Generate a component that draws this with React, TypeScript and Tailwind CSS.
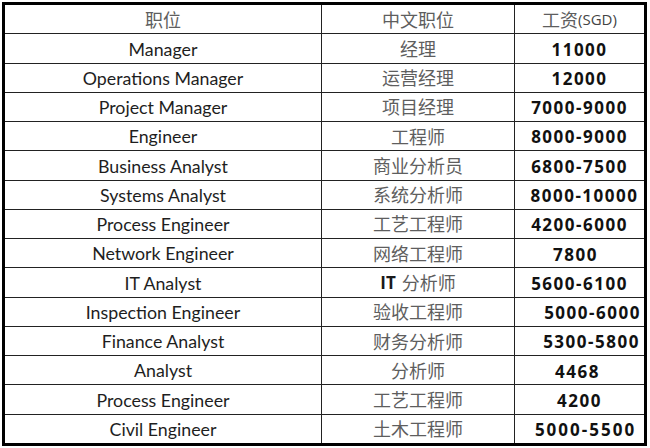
import React from "react";

type Row = { en: string; zh: React.ReactNode; pay: string; nudge: string };

const zhFont = { fontFamily: '"Noto Sans CJK SC", sans-serif' };

const rows: Row[] = [
  { en: "Manager", zh: "经理", pay: "11000", nudge: "" },
  { en: "Operations Manager", zh: "运营经理", pay: "12000", nudge: "" },
  { en: "Project Manager", zh: "项目经理", pay: "7000-9000", nudge: "" },
  { en: "Engineer", zh: "工程师", pay: "8000-9000", nudge: "" },
  { en: "Business Analyst", zh: "商业分析员", pay: "6800-7500", nudge: "" },
  { en: "Systems Analyst", zh: "系统分析师", pay: "8000-10000", nudge: "pl-[10px]" },
  { en: "Process Engineer", zh: "工艺工程师", pay: "4200-6000", nudge: "" },
  { en: "Network Engineer", zh: "网络工程师", pay: "7800", nudge: "pr-[8px]" },
  {
    en: "IT Analyst",
    zh: (
      <>
        <span className="font-bold text-[#1a1a1a] font-['Open_Sans'] text-[17px] mr-[6px]">IT</span>分析师
      </>
    ),
    pay: "5600-6100",
    nudge: "",
  },
  { en: "Inspection Engineer", zh: "验收工程师", pay: "5000-6000", nudge: "pl-[26px]" },
  { en: "Finance Analyst", zh: "财务分析师", pay: "5300-5800", nudge: "pl-[24px]" },
  { en: "Analyst", zh: "分析师", pay: "4468", nudge: "pr-[4px]" },
  { en: "Process Engineer", zh: "工艺工程师", pay: "4200", nudge: "" },
  { en: "Civil Engineer", zh: "土木工程师", pay: "5000-5500", nudge: "pl-[12px] tracking-[2px]" },
];

export default function App() {
  return (
    <div className="w-[650px] h-[448px] bg-white pl-[2px] pt-[2px]">
      <div className="w-[645px] h-[444px] border-[3px] border-black flex flex-col">
        <div className="flex-1 grid grid-cols-[317px_193px_1fr] border-b border-[#222] text-[#5e5e5e] text-[18px]" style={zhFont}>
          <div className="border-r border-[#222] flex items-center justify-center">职位</div>
          <div className="border-r border-[#222] flex items-center justify-center">中文职位</div>
          <div className="flex items-center justify-center">
            工资<span className="font-['Open_Sans'] text-[15px] text-[#444]">(SGD)</span>
          </div>
        </div>
        {rows.map((r, i) => (
          <div
            key={i}
            className={`flex-1 grid grid-cols-[317px_193px_1fr] ${i < rows.length - 1 ? "border-b border-[#222]" : ""}`}
          >
            <div className="border-r border-[#222] flex items-center justify-center pt-[1px] text-[17.8px] text-[#1e1e1e] font-['Lato']">
              {r.en}
            </div>
            <div
              className="border-r border-[#222] flex items-center justify-center text-[18px] text-[#5e5e5e]"
              style={zhFont}
            >
              {r.zh}
            </div>
            <div
              className={`flex items-center justify-center pt-[2px] text-[17px] font-bold tracking-[1.5px] text-[#111] font-['Open_Sans'] ${r.nudge}`}
            >
              {r.pay}
            </div>
          </div>
        ))}
      </div>
    </div>
  );
}
